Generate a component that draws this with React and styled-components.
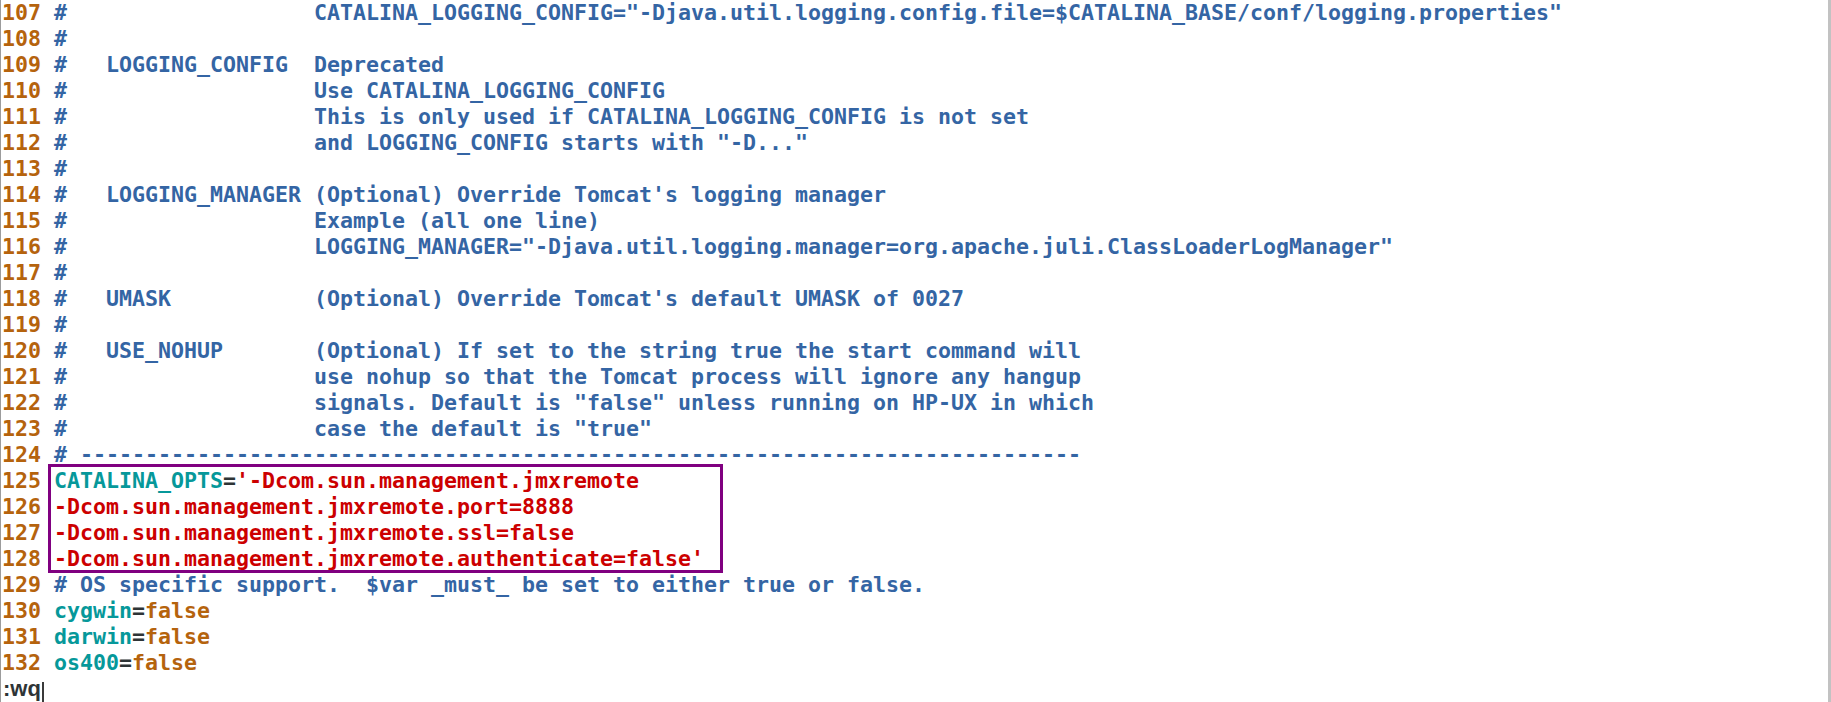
import React from 'react';
import styled, { createGlobalStyle } from 'styled-components';

const GlobalStyle = createGlobalStyle`
    html, body {
        margin: 0;
        padding: 0;
        background: #ffffff;
        overflow: hidden;
    }
`

const colors = {
    nr: '#b5630d',
    c: '#3465a4',
    id: '#06989a',
    op: '#2e3436',
    str: '#cc0000',
    bool: '#b5630d',
}

const Screen = styled.div`
    width: 1831px;
    height: 702px;
    box-sizing: border-box;
    border-left: 1px solid #9c9c9c;
    border-right: 3px solid #c2c2c2;
    display: flex;
    flex-direction: column;
    padding-left: 1px;
    font-family: "DejaVu Sans Mono", "Liberation Mono", monospace;
    font-weight: bold;
    font-size: 21.6px;
    line-height: 26px;
    white-space: pre;
`

const Line = styled.div`
    display: flex;
    height: 26px;
`

const LineNo = styled.span`
    color: ${colors.nr};
    width: 52px;
    flex-shrink: 0;
`

const Token = styled.span`
    color: ${p => colors[p.kind]};
`

const Marked = styled.div`
    position: relative;
    display: flex;
    flex-direction: column;
`

const MarkBox = styled.div`
    position: absolute;
    left: 46px;
    top: -4px;
    width: 675px;
    height: 109px;
    box-sizing: border-box;
    border: 3px solid #800080;
    pointer-events: none;
`

const CmdLine = styled.div`
    display: flex;
    align-items: center;
    height: 26px;
    padding-left: 1px;
    font-family: "Liberation Sans", Arial, sans-serif;
    font-weight: bold;
    font-size: 22px;
    color: #2e3436;
`

const Cursor = styled.span`
    display: inline-block;
    width: 2px;
    height: 20px;
    margin-top: 6px;
    margin-left: 1px;
    background: #3a3a3a;
`

const pad = '                   '

const lines = [
    [107, [['#' + pad + 'CATALINA_LOGGING_CONFIG="-Djava.util.logging.config.file=$CATALINA_BASE/conf/logging.properties"', 'c']]],
    [108, [['#', 'c']]],
    [109, [['#   LOGGING_CONFIG  Deprecated', 'c']]],
    [110, [['#' + pad + 'Use CATALINA_LOGGING_CONFIG', 'c']]],
    [111, [['#' + pad + 'This is only used if CATALINA_LOGGING_CONFIG is not set', 'c']]],
    [112, [['#' + pad + 'and LOGGING_CONFIG starts with "-D..."', 'c']]],
    [113, [['#', 'c']]],
    [114, [["#   LOGGING_MANAGER (Optional) Override Tomcat's logging manager", 'c']]],
    [115, [['#' + pad + 'Example (all one line)', 'c']]],
    [116, [['#' + pad + 'LOGGING_MANAGER="-Djava.util.logging.manager=org.apache.juli.ClassLoaderLogManager"', 'c']]],
    [117, [['#', 'c']]],
    [118, [["#   UMASK           (Optional) Override Tomcat's default UMASK of 0027", 'c']]],
    [119, [['#', 'c']]],
    [120, [['#   USE_NOHUP       (Optional) If set to the string true the start command will', 'c']]],
    [121, [['#' + pad + 'use nohup so that the Tomcat process will ignore any hangup', 'c']]],
    [122, [['#' + pad + 'signals. Default is "false" unless running on HP-UX in which', 'c']]],
    [123, [['#' + pad + 'case the default is "true"', 'c']]],
    [124, [['# ' + '-'.repeat(77), 'c']]],
]

const marked = [
    [125, [['CATALINA_OPTS', 'id'], ['=', 'op'], ["'-Dcom.sun.management.jmxremote", 'str']]],
    [126, [['-Dcom.sun.management.jmxremote.port=8888', 'str']]],
    [127, [['-Dcom.sun.management.jmxremote.ssl=false', 'str']]],
    [128, [["-Dcom.sun.management.jmxremote.authenticate=false'", 'str']]],
]

const after = [
    [129, [['# OS specific support.  $var _must_ be set to either true or false.', 'c']]],
    [130, [['cygwin', 'id'], ['=', 'op'], ['false', 'bool']]],
    [131, [['darwin', 'id'], ['=', 'op'], ['false', 'bool']]],
    [132, [['os400', 'id'], ['=', 'op'], ['false', 'bool']]],
]

const CodeLine = ({ nr, tokens }) => (
    <Line>
        <LineNo>{nr}</LineNo>
        {tokens.map(([text, kind], i) => (
            <Token key={i} kind={kind}>{text}</Token>
        ))}
    </Line>
)

export default function App() {
    return (
        <>
            <GlobalStyle />
            <Screen>
                {lines.map(([nr, tokens]) => <CodeLine key={nr} nr={nr} tokens={tokens} />)}
                <Marked>
                    {marked.map(([nr, tokens]) => <CodeLine key={nr} nr={nr} tokens={tokens} />)}
                    <MarkBox />
                </Marked>
                {after.map(([nr, tokens]) => <CodeLine key={nr} nr={nr} tokens={tokens} />)}
                <CmdLine>
                    <span>:wq</span>
                    <Cursor />
                </CmdLine>
            </Screen>
        </>
    );
}
